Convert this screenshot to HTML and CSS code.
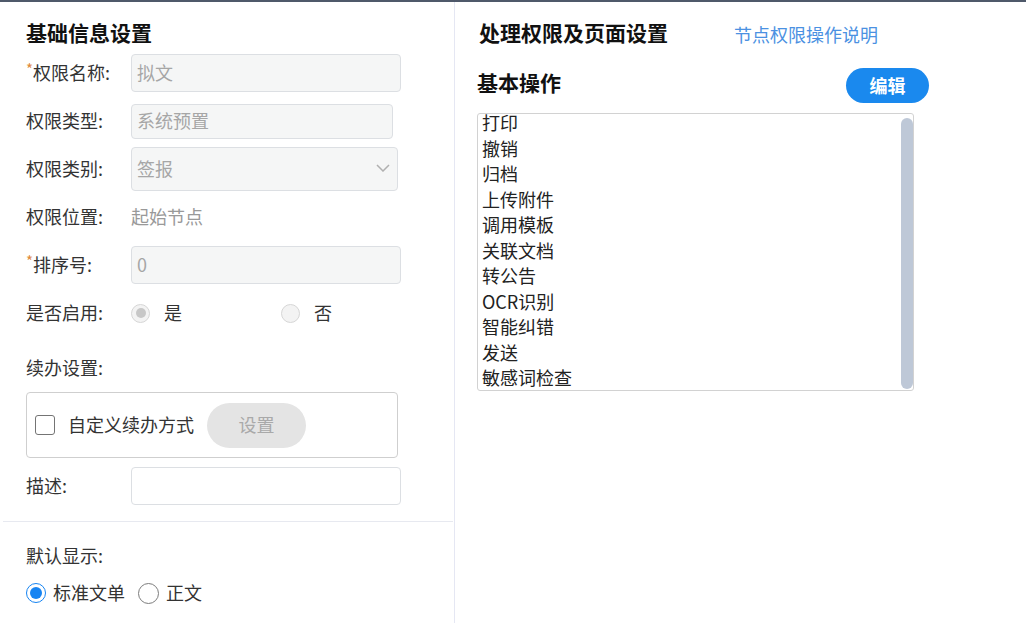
FILE: index.html
```html
<!DOCTYPE html>
<html lang="zh-CN">
<head>
<meta charset="utf-8">
<title>节点权限设置</title>
<link rel="stylesheet" href="styles.css">
</head>
<body>
<div class="page">
  <section class="base">
    <div class="pad">
      <h2 class="title">基础信息设置</h2>

      <div class="row">
        <span class="lbl"><span class="req">*</span>权限名称:</span>
        <div class="field w270 h38">拟文</div>
      </div>
      <div class="row">
        <span class="lbl">权限类型:</span>
        <div class="field w262 h35">系统预置</div>
      </div>
      <div class="row">
        <span class="lbl">权限类别:</span>
        <div class="field select w267 h44">
          <span>签报</span>
          <svg class="chev" width="14" height="8" viewBox="0 0 14 8"><polyline points="1,1 7,7 13,1" fill="none" stroke="#b0b0b0" stroke-width="1.5"/></svg>
        </div>
      </div>
      <div class="row">
        <span class="lbl">权限位置:</span>
        <span class="plain">起始节点</span>
      </div>
      <div class="row">
        <span class="lbl"><span class="req">*</span>排序号:</span>
        <div class="field w270 h38">0</div>
      </div>
      <div class="row">
        <span class="lbl">是否启用:</span>
        <div class="opts">
          <span class="opt first"><span class="radio off-dis checked"></span><span>是</span></span>
          <span class="opt"><span class="radio off-dis"></span><span>否</span></span>
        </div>
      </div>

      <div class="caption c1">续办设置:</div>
      <div class="renew">
        <span class="check"></span>
        <span class="renew-text">自定义续办方式</span>
        <span class="btn-gray">设置</span>
      </div>

      <div class="row desc">
        <span class="lbl">描述:</span>
        <div class="field white w270 h38"></div>
      </div>
    </div>

    <hr class="divider">

    <div class="pad">
      <div class="caption c2">默认显示:</div>
      <div class="show-opts">
        <span class="opt2"><span class="radio blue"></span><span>标准文单</span></span>
        <span class="opt2"><span class="radio grey"></span><span>正文</span></span>
      </div>
    </div>
  </section>

  <section class="ops">
    <div class="ops-head">
      <h2 class="title t2">处理权限及页面设置</h2>
      <a class="help">节点权限操作说明</a>
    </div>
    <div class="ops-bar">
      <h3 class="sub">基本操作</h3>
      <span class="btn-blue">编辑</span>
    </div>
    <div class="listbox">
      <div class="items">
        <ul>
          <li>打印</li>
          <li>撤销</li>
          <li>归档</li>
          <li>上传附件</li>
          <li>调用模板</li>
          <li>关联文档</li>
          <li>转公告</li>
          <li>OCR识别</li>
          <li>智能纠错</li>
          <li>发送</li>
          <li>敏感词检查</li>
        </ul>
      </div>
      <div class="track"><div class="thumb"></div></div>
    </div>
  </section>
</div>
</body>
</html>
```

FILE: styles.css
```css
* { box-sizing: border-box; }

html, body {
  margin: 0;
  padding: 0;
  background: #fff;
}

body {
  font-family: "Noto Sans CJK SC", "Noto Sans", sans-serif;
  font-size: 18px;
  color: #333;
}

.page {
  display: flex;
  height: 623px;
  border-top: 2px solid #4f596a;
}

/* left column: basic info */
.base {
  width: 455px;
  flex: none;
  border-right: 1px solid #e5e7f3;
  padding-top: 16px;
}

.pad {
  padding-left: 26px;
}

.title {
  margin: 0 0 3px;
  font-size: 21px;
  line-height: 28px;
  font-weight: 700;
  color: #111;
}

.row {
  display: flex;
  align-items: center;
  height: 48px;
}

.lbl {
  width: 105px;
  flex: none;
  line-height: 26px;
  padding-bottom: 3px;
  color: #333;
  white-space: nowrap;
}

.req {
  color: #e08a3c;
  font-size: 15px;
  vertical-align: top;
  line-height: 20px;
}

.field {
  display: flex;
  align-items: center;
  padding-left: 5px;
  padding-bottom: 2px;
  border: 1px solid #dcdfe3;
  border-radius: 4px;
  background: #f5f6f6;
  color: #a6a6a6;
  line-height: 24px;
}

.field.white { background: #fff; }

.select {
  justify-content: space-between;
  padding-right: 7px;
}

.chev { display: block; }

.w270 { width: 270px; }
.w262 { width: 262px; }
.w267 { width: 267px; }
.h38 { height: 38px; }
.h35 { height: 35px; }
.h44 { height: 44px; }

.plain {
  color: #999;
  line-height: 26px;
  padding-bottom: 3px;
}

.opts {
  display: flex;
  align-items: center;
}

.opt {
  display: flex;
  align-items: center;
  gap: 14px;
  line-height: 26px;
}

.opt > span:last-child { padding-bottom: 3px; }

.opt.first { width: 150px; }

.radio {
  display: inline-block;
  flex: none;
  border-radius: 50%;
  position: relative;
}

.radio.off-dis {
  width: 19px;
  height: 19px;
  border: 1px solid #d6d6d6;
  background: #f3f3f3;
}

.radio.off-dis.checked::after {
  content: "";
  position: absolute;
  left: 3.5px;
  top: 3.5px;
  width: 10px;
  height: 10px;
  border-radius: 50%;
  background: #c7c7c7;
}

.caption {
  line-height: 26px;
  color: #333;
}

.caption.c1 { margin-top: 17px; }
.caption.c2 { margin-top: 20px; }

.renew {
  display: flex;
  align-items: center;
  width: 372px;
  height: 66px;
  margin-top: 12px;
  padding-left: 8px;
  border: 1px solid #cfcfcf;
  border-radius: 4px;
}

.check {
  width: 20px;
  height: 20px;
  flex: none;
  border: 1px solid #747474;
  border-radius: 3px;
  background: #fff;
}

.renew-text {
  margin-left: 13px;
  line-height: 26px;
  padding-bottom: 2px;
  color: #333;
}

.btn-gray {
  margin-left: 13px;
  width: 99px;
  height: 45px;
  border-radius: 23px;
  background: #e4e4e4;
  color: #a9a9a9;
  display: flex;
  align-items: center;
  justify-content: center;
  padding-bottom: 2px;
}

.row.desc {
  height: 38px;
  margin-top: 9px;
}

.divider {
  margin: 16px 1px 0 3px;
  border: 0;
  border-top: 1px solid #e7e9f0;
  height: 0;
}

.show-opts {
  display: flex;
  align-items: center;
  margin-top: 12px;
  height: 26px;
}

.opt2 {
  display: flex;
  align-items: center;
  gap: 7px;
  margin-right: 13px;
  line-height: 26px;
}

.opt2 > span:last-child { padding-bottom: 2px; }

.radio.blue {
  width: 20px;
  height: 20px;
  border: 1.5px solid #1684f2;
  background: #fff;
}

.radio.blue::after {
  content: "";
  position: absolute;
  left: 2.5px;
  top: 2.5px;
  width: 12px;
  height: 12px;
  border-radius: 50%;
  background: #1684f2;
}

.radio.grey {
  width: 21px;
  height: 21px;
  border: 1.5px solid #7c7c7c;
  background: #fff;
}

/* right column: operations */
.ops {
  flex: 1;
  padding: 16px 0 0 22px;
}

.ops-head {
  display: flex;
  align-items: center;
  height: 28px;
}

.title.t2 {
  margin: 0 0 0 2px;
}

.help {
  margin-left: 66px;
  margin-top: 4px;
  color: #4b91e2;
  font-size: 18px;
  line-height: 26px;
  cursor: pointer;
}

.ops-bar {
  display: flex;
  align-items: flex-start;
  justify-content: space-between;
  width: 452px;
  height: 35px;
  margin-top: 22px;
}

.sub {
  margin: 0;
  font-size: 21px;
  line-height: 28px;
  font-weight: 700;
  color: #111;
}

.btn-blue {
  width: 83px;
  height: 35px;
  border-radius: 18px;
  background: #1a89ee;
  color: #fff;
  font-weight: 700;
  display: flex;
  align-items: center;
  justify-content: center;
  padding-bottom: 1px;
}

.listbox {
  display: flex;
  width: 437px;
  height: 278px;
  margin-top: 10px;
  border: 1px solid #d2d2d2;
  border-radius: 3px;
  overflow: hidden;
}

.items {
  flex: 1;
  overflow: hidden;
  padding-left: 4px;
}

.items ul {
  list-style: none;
  margin: -4px 0 0;
  padding: 0;
}

.items li {
  line-height: 25.5px;
  height: 25.5px;
  color: #222;
  white-space: nowrap;
}

.track {
  width: 12px;
  flex: none;
  display: flex;
  padding: 4px 0 1px;
}

.thumb {
  flex: 1;
  border-radius: 6px;
  background: #bec8d7;
}
```
